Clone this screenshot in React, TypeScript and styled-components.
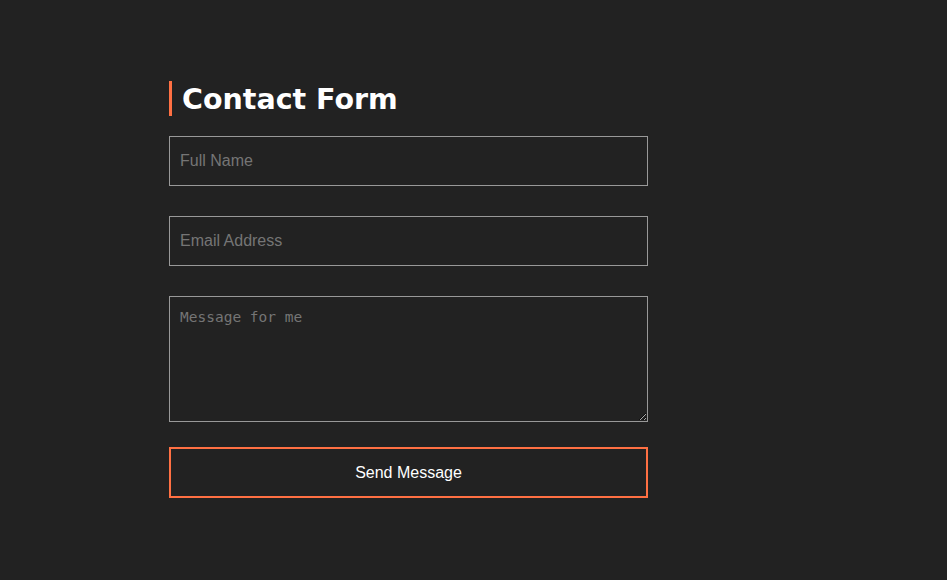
import React from "react";
import styled, { createGlobalStyle } from "styled-components";

const Global = createGlobalStyle`
  html, body { margin: 0; padding: 0; background: #222222; }
  body { font-family: "Liberation Sans", Arial, sans-serif; }
  * { box-sizing: border-box; }
`;

const Page = styled.div`
  min-height: 580px;
  background: #222222;
  padding: 81px 0 0 169px;
`;

const Form = styled.form`
  width: 479px;
  display: flex;
  flex-direction: column;
`;

const Title = styled.h1`
  margin: 0 0 20px 0;
  border-left: 3px solid #ff7043;
  padding: 2px 0 0 10px;
  font-family: "DejaVu Sans", Verdana, sans-serif;
  font-weight: bold;
  font-size: 28.5px;
  line-height: 33px;
  color: #ffffff;
`;

const Field = styled.input`
  width: 100%;
  height: 50px;
  margin: 0 0 30px 0;
  padding: 0 10px;
  background: transparent;
  border: 1px solid #999999;
  color: #ffffff;
  font-family: "Liberation Sans", Arial, sans-serif;
  font-size: 16px;
  outline: none;
  &::placeholder { color: #757575; }
`;

const Area = styled.textarea`
  width: 100%;
  height: 126px;
  margin: 0 0 25px 0;
  padding: 12px 10px 10px;
  background: transparent;
  border: 1px solid #999999;
  color: #ffffff;
  font-family: "DejaVu Sans Mono", monospace;
  font-size: 14.5px;
  outline: none;
  display: block;
  &::placeholder { color: #757575; }
`;

const Button = styled.button`
  width: 100%;
  height: 51px;
  background: transparent;
  border: 2px solid #ff7043;
  color: #ffffff;
  font-family: "Liberation Sans", Arial, sans-serif;
  font-size: 16px;
  cursor: pointer;
`;

export default function App() {
  return (
    <>
      <Global />
      <Page>
        <Form onSubmit={(e) => e.preventDefault()}>
          <Title>Contact Form</Title>
          <Field type="text" placeholder="Full Name" />
          <Field type="email" placeholder="Email Address" />
          <Area placeholder="Message for me" />
          <Button type="submit">Send Message</Button>
        </Form>
      </Page>
    </>
  );
}
